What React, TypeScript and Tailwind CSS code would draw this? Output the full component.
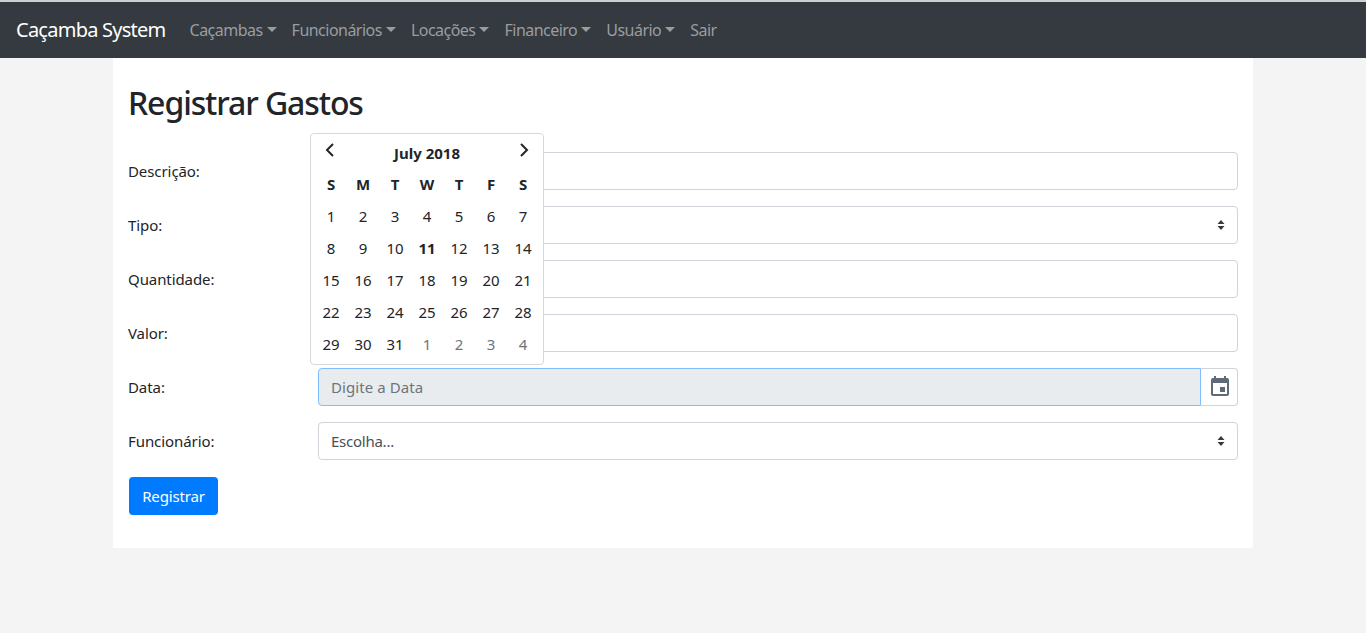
import React from "react";

const nav = ["Caçambas", "Funcionários", "Locações", "Financeiro", "Usuário"];
const days = [
  ["1", "2", "3", "4", "5", "6", "7"],
  ["8", "9", "10", "11", "12", "13", "14"],
  ["15", "16", "17", "18", "19", "20", "21"],
  ["22", "23", "24", "25", "26", "27", "28"],
  ["29", "30", "31", "1", "2", "3", "4"],
];
const font = "[font-family:'Noto_Sans',sans-serif]";

function Chevrons() {
  return (
    <svg width="8" height="10" viewBox="0 0 8 10" className="absolute right-[13px] top-[14px]">
      <path d="M4 0L7.5 4H.5zM4 10L.5 6h7z" fill="#343a40" />
    </svg>
  );
}

function Row({ label, children }: { label: string; children?: React.ReactNode }) {
  return (
    <div className="flex h-[38px] items-center mb-[16px]">
      <label className="w-[190px] text-[15px] text-[#212529] tracking-[-0.08px]">{label}</label>
      <div className="flex-1 relative flex h-full">{children}</div>
    </div>
  );
}

const box = "flex-1 h-full border border-[#ced4da] rounded-[4px] bg-white";

export default function App() {
  return (
    <div className={`min-h-[633px] bg-[#f4f4f4] ${font}`}>
      <nav className="h-[58px] bg-[#343a40] border-t-2 border-[#cfcfcf] flex items-center pl-[16px]">
        <span className="text-[20px] text-white tracking-[-0.75px] mr-[24px]">Caçamba System</span>
        <div className="flex gap-[15px] items-center text-[16px] text-[#9a9da0] tracking-[-0.52px]">
          {nav.map((n) => (
            <span key={n} className="flex items-center">
              {n}
              <span className="ml-[4px] w-0 h-0 border-x-[5px] border-x-transparent border-t-[5px] border-t-[#9a9da0] -mt-[2px]" />
            </span>
          ))}
          <span>Sair</span>
        </div>
      </nav>
      <main className="relative w-[1140px] h-[490px] ml-[113px] bg-white px-[15px] pt-[23px]">
        <h2 className="text-[32px] leading-[44px] font-medium text-[#212529] tracking-[-1.1px] mb-[27px]">Registrar Gastos</h2>
        <Row label="Descrição:"><div className={box} /></Row>
        <Row label="Tipo:"><div className={box} /><Chevrons /></Row>
        <Row label="Quantidade:"><div className={box} /></Row>
        <Row label="Valor:"><div className={box} /></Row>
        <Row label="Data:">
          <div className="flex-1 h-full border border-[#80bdff] rounded-l-[4px] bg-[#e9ecef] flex items-center pl-[12px] text-[15px] text-[#6c757d] tracking-[0.08px]">
            Digite a Data
          </div>
          <div className="w-[37px] h-full border border-l-0 border-[#ced4da] rounded-r-[4px] bg-white flex items-center justify-center pl-[1px]">
            <svg width="24" height="24" viewBox="0 0 24 24" fill="#5f6b76">
              <path d="M17 12h-5v5h5v-5zM16 1v2H8V1H6v2H5c-1.1 0-2 .9-2 2v14c0 1.1.9 2 2 2h14c1.1 0 2-.9 2-2V5c0-1.1-.9-2-2-2h-1V1h-2zm3 18H5V8h14v11z" />
            </svg>
          </div>
        </Row>
        <Row label="Funcionário:">
          <div className={`${box} flex items-center pl-[12px] text-[15px] text-[#495057] tracking-[-0.25px]`}>Escolha...</div>
          <Chevrons />
        </Row>
        <button className="ml-[1px] mt-[1px] w-[89px] h-[38px] rounded-[4px] bg-[#007bff] text-white text-[15px] tracking-[-0.15px]">Registrar</button>

        <div className="absolute left-[197px] top-[75px] w-[234px] h-[232px] bg-white border border-[#d5d8dc] rounded-[4px] text-[#212529] px-[4px] pt-[3px]">
          <div className="relative h-[31px] flex items-center justify-center pt-[1px] text-[15px] font-bold">
            July 2018
            <svg width="12" height="14" viewBox="0 0 12 14" className="absolute left-[9px] top-[6px]" fill="none" stroke="#212529" strokeWidth="2"><path d="M9 1L3 7l6 6" /></svg>
            <svg width="12" height="14" viewBox="0 0 12 14" className="absolute right-[9px] top-[6px]" fill="none" stroke="#212529" strokeWidth="2"><path d="M3 1l6 6-6 6" /></svg>
          </div>
          <div className="grid grid-cols-7 w-[224px] text-center text-[15px] leading-[32px] tracking-[-0.2px]">
            {["S", "M", "T", "W", "T", "F", "S"].map((d, i) => (
              <div key={i} className="font-bold">{d}</div>
            ))}
            {days.flatMap((w, r) =>
              w.map((d, i) => (
                <div key={`${r}-${i}`} className={`${d === "11" && r === 1 ? "font-bold" : ""} ${r === 4 && i > 2 ? "text-[#6c757d]" : ""}`}>{d}</div>
              ))
            )}
          </div>
        </div>
      </main>
    </div>
  );
}
